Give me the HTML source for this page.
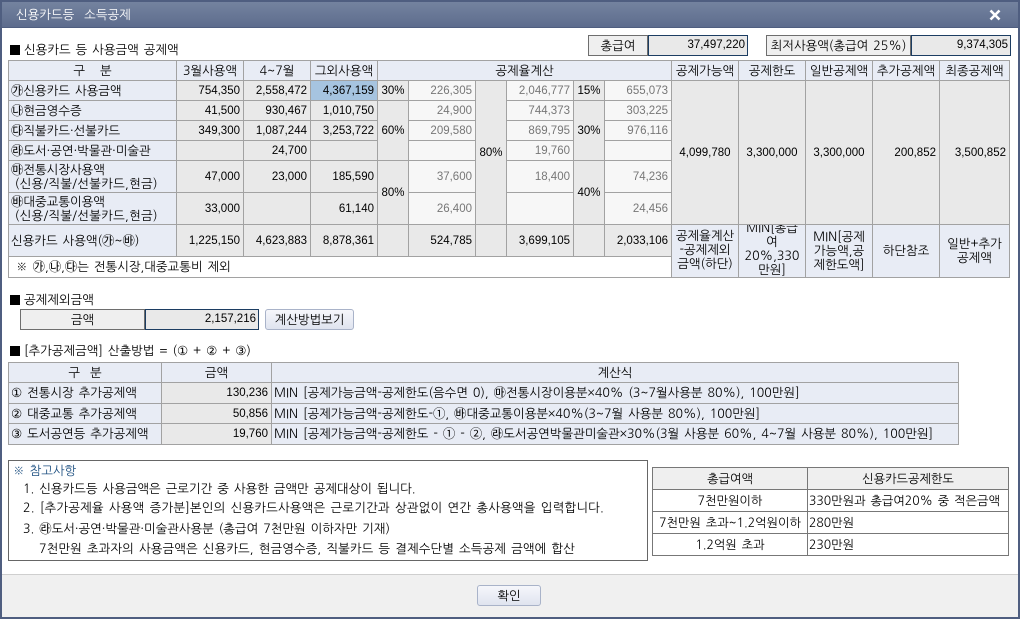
<!DOCTYPE html>
<html lang="ko"><head><meta charset="utf-8"><title>신용카드등 소득공제</title>
<style>
*{box-sizing:border-box}
html,body{margin:0;padding:0;width:1020px;height:619px;overflow:hidden;background:#fff}
body{position:relative;font:12.4px/14px "NanumGothic","Liberation Sans",sans-serif;color:#000;word-spacing:1.5px}
.a{position:absolute;white-space:nowrap}
table{position:absolute;border-collapse:collapse;table-layout:fixed}
td{border:1px solid #a2a2a2;padding:0 3px;white-space:nowrap;overflow:hidden;font-size:12.4px;line-height:14px}
.h{background:#e8ecf5;text-align:center}
.l{background:#e8ecf5;text-align:left;padding-left:2px}
.g{background:#e9e9e9;text-align:right}
.c{background:#e9e9e9;text-align:center}
.f{background:#f7f7f7;text-align:right;color:#777}
.w{background:#fff}
td.n,.n{font:11.5px/14px "Liberation Sans",sans-serif}
.sq{display:inline-block;width:10px;height:10px;background:#000;margin-right:4px;vertical-align:-1px}
.box{border:1px solid #6e6e6e;background:#efefef;text-align:center;height:21px;line-height:19px}
.val{border:1px solid #1c3d62;background:#e9e9e9;text-align:right;padding-right:2px;height:21px;line-height:19px;font:11.5px/19px "Liberation Sans",sans-serif}
.btn{border:1px solid #a9b3c9;border-radius:3px;background:linear-gradient(#f6f7fb,#dfe4ef);text-align:center;height:21px;line-height:19px}
.p{letter-spacing:.3px;word-spacing:0}
.r td{border-color:#777;font-size:12.2px}
</style></head><body>
<div class="a" style="left:0;top:0;width:1020px;height:619px;background:#4f5e80"></div>
<div class="a" style="left:2px;top:2px;width:1016px;height:25px;background:linear-gradient(#74839f,#5d6c8d)"></div>
<div class="a" style="left:16px;top:8px;color:#fff">신용카드등 &nbsp;소득공제</div>
<svg class="a" style="left:989px;top:9px" width="12" height="12" viewBox="0 0 12 12"><path d="M1.5 1.5L10.5 10.5M10.5 1.5L1.5 10.5" stroke="#fff" stroke-width="2.6"/></svg>
<div class="a" style="left:2px;top:28px;width:1016px;height:546px;background:#fff"></div>
<div class="a" style="left:2px;top:574px;width:1016px;height:43px;background:#f0f0f0;border-top:1px solid #cfcfcf"></div>

<div class="a" style="left:10px;top:43px"><span class="sq"></span>신용카드 등 사용금액 공제액</div>
<div class="a box" style="left:588px;top:35px;width:60px">총급여</div>
<div class="a val" style="left:648px;top:35px;width:100px">37,497,220</div>
<div class="a box" style="left:766px;top:35px;width:145px">최저사용액(총급여 25%)</div>
<div class="a val" style="left:911px;top:35px;width:100px">9,374,305</div>

<table style="left:8px;top:60px;width:1002px">
<colgroup><col style="width:168px"><col style="width:67px"><col style="width:67px"><col style="width:67px"><col style="width:31px"><col style="width:67px"><col style="width:31px"><col style="width:67px"><col style="width:31px"><col style="width:67px"><col style="width:67px"><col style="width:67px"><col style="width:67px"><col style="width:67px"><col style="width:70px"></colgroup>
<tr style="height:20px"><td class="h">구 &nbsp; 분</td><td class="h">3월사용액</td><td class="h">4~7월</td><td class="h">그외사용액</td><td class="h" colspan="6">공제율계산</td><td class="h">공제가능액</td><td class="h">공제한도</td><td class="h">일반공제액</td><td class="h">추가공제액</td><td class="h">최종공제액</td></tr>
<tr style="height:20px"><td class="l">㉮신용카드 사용금액</td><td class="g n">754,350</td><td class="g n">2,558,472</td><td class="g n" style="background:#a6c4e0">4,367,159</td><td class="c n">30%</td><td class="f n">226,305</td><td class="c n" rowspan="6">80%</td><td class="f n">2,046,777</td><td class="c n">15%</td><td class="f n">655,073</td><td class="c n" rowspan="6">4,099,780</td><td class="c n" rowspan="6">3,300,000</td><td class="c n" rowspan="6">3,300,000</td><td class="g n" rowspan="6">200,852</td><td class="g n" rowspan="6">3,500,852</td></tr>
<tr style="height:20px"><td class="l">㉯현금영수증</td><td class="g n">41,500</td><td class="g n">930,467</td><td class="g n">1,010,750</td><td class="c n" rowspan="3">60%</td><td class="f n">24,900</td><td class="f n">744,373</td><td class="c n" rowspan="3">30%</td><td class="f n">303,225</td></tr>
<tr style="height:20px"><td class="l">㉰직불카드·선불카드</td><td class="g n">349,300</td><td class="g n">1,087,244</td><td class="g n">3,253,722</td><td class="f n">209,580</td><td class="f n">869,795</td><td class="f n">976,116</td></tr>
<tr style="height:20px"><td class="l">㉱도서·공연·박물관·미술관</td><td class="g"></td><td class="g n">24,700</td><td class="g"></td><td class="f"></td><td class="f n">19,760</td><td class="f"></td></tr>
<tr style="height:32px"><td class="l">㉲전통시장사용액<br><span class="p">&nbsp;(신용/직불/선불카드,현금)</span></td><td class="g n">47,000</td><td class="g n">23,000</td><td class="g n">185,590</td><td class="c n" rowspan="2">80%</td><td class="f n">37,600</td><td class="f n">18,400</td><td class="c n" rowspan="2">40%</td><td class="f n">74,236</td></tr>
<tr style="height:32px"><td class="l">㉳대중교통이용액<br><span class="p">&nbsp;(신용/직불/선불카드,현금)</span></td><td class="g n">33,000</td><td class="g"></td><td class="g n">61,140</td><td class="f n">26,400</td><td class="f"></td><td class="f n">24,456</td></tr>
<tr style="height:32px"><td class="l">신용카드 사용액(㉮~㉳)</td><td class="g n">1,225,150</td><td class="g n">4,623,883</td><td class="g n">8,878,361</td><td class="g"></td><td class="g n">524,785</td><td class="g"></td><td class="g n">3,699,105</td><td class="g"></td><td class="g n">2,033,106</td>
<td class="h" rowspan="2" style="padding:0"><div style="height:52px;line-height:14px;padding-top:4px">공제율계산<br>-공제제외<br>금액(하단)</div></td>
<td class="h" rowspan="2" style="padding:0"><div style="height:52px;overflow:hidden"><div style="line-height:14px;margin-top:-4px">MIN[총급<br>여<br>20%,330<br>만원]</div></div></td>
<td class="h" rowspan="2" style="padding:0"><div style="height:52px;line-height:14px;padding-top:5px">MIN[공제<br>가능액,공<br>제한도액]</div></td>
<td class="h" rowspan="2">하단참조</td><td class="h" rowspan="2">일반+추가<br>공제액</td></tr>
<tr style="height:21px"><td class="w" colspan="10" style="padding-left:7px">※ ㉮,㉯,㉰는 전통시장,대중교통비 제외</td></tr>
</table>

<div class="a" style="left:10px;top:293px"><span class="sq"></span>공제제외금액</div>
<div class="a box" style="left:20px;top:309px;width:125px">금액</div>
<div class="a val" style="left:145px;top:309px;width:114px">2,157,216</div>
<div class="a btn" style="left:265px;top:309px;width:89px">계산방법보기</div>

<div class="a" style="left:10px;top:344px"><span class="sq"></span>[추가공제금액] 산출방법 = (① + ② + ③)</div>
<table style="left:8px;top:362px;width:950px">
<colgroup><col style="width:153px"><col style="width:110px"><col style="width:687px"></colgroup>
<tr style="height:20px"><td class="h">구 &nbsp;분</td><td class="h">금액</td><td class="h">계산식</td></tr>
<tr style="height:21px"><td class="l">① 전통시장 추가공제액</td><td class="g n">130,236</td><td class="l">MIN [공제가능금액-공제한도(음수면 0), ㉲전통시장이용분×40% (3~7월사용분 80%), 100만원]</td></tr>
<tr style="height:20px"><td class="l">② 대중교통 추가공제액</td><td class="g n">50,856</td><td class="l">MIN [공제가능금액-공제한도-①, ㉳대중교통이용분×40%(3~7월 사용분 80%), 100만원]</td></tr>
<tr style="height:21px"><td class="l">③ 도서공연등 추가공제액</td><td class="g n">19,760</td><td class="l">MIN [공제가능금액-공제한도 - ① - ②, ㉱도서공연박물관미술관×30%(3월 사용분 60%, 4~7월 사용분 80%), 100만원]</td></tr>
</table>

<div class="a" style="left:8px;top:460px;width:640px;height:101px;border:1px solid #666"></div>
<div class="a" style="left:13px;top:464px;color:#1c4f80">※ 참고사항</div>
<div class="a" style="left:23px;top:482px">1. 신용카드등 사용금액은 근로기간 중 사용한 금액만 공제대상이 됩니다.</div>
<div class="a" style="left:23px;top:501px;letter-spacing:.2px">2. [추가공제율 사용액 증가분]본인의 신용카드사용액은 근로기간과 상관없이 연간 총사용액을 입력합니다.</div>
<div class="a" style="left:23px;top:522px">3. ㉱도서·공연·박물관·미술관사용분 (총급여 7천만원 이하자만 기재)</div>
<div class="a" style="left:39px;top:542px;letter-spacing:.1px">7천만원 초과자의 사용금액은 신용카드, 현금영수증, 직불카드 등 결제수단별 소득공제 금액에 합산</div>

<table class="r" style="left:652px;top:467px;width:356px">
<colgroup><col style="width:155px"><col style="width:201px"></colgroup>
<tr style="height:22px"><td style="background:#efefef;text-align:center">총급여액</td><td style="background:#efefef;text-align:center">신용카드공제한도</td></tr>
<tr style="height:22px"><td style="text-align:center">7천만원이하</td><td style="padding-left:1px">330만원과 총급여20% 중 적은금액</td></tr>
<tr style="height:22px"><td style="text-align:center;padding:0">7천만원 초과~1.2억원이하</td><td style="padding-left:1px">280만원</td></tr>
<tr style="height:22px"><td style="text-align:center">1.2억원 초과</td><td style="padding-left:1px">230만원</td></tr>
</table>

<div class="a btn" style="left:477px;top:585px;width:64px">확인</div>
</body></html>
